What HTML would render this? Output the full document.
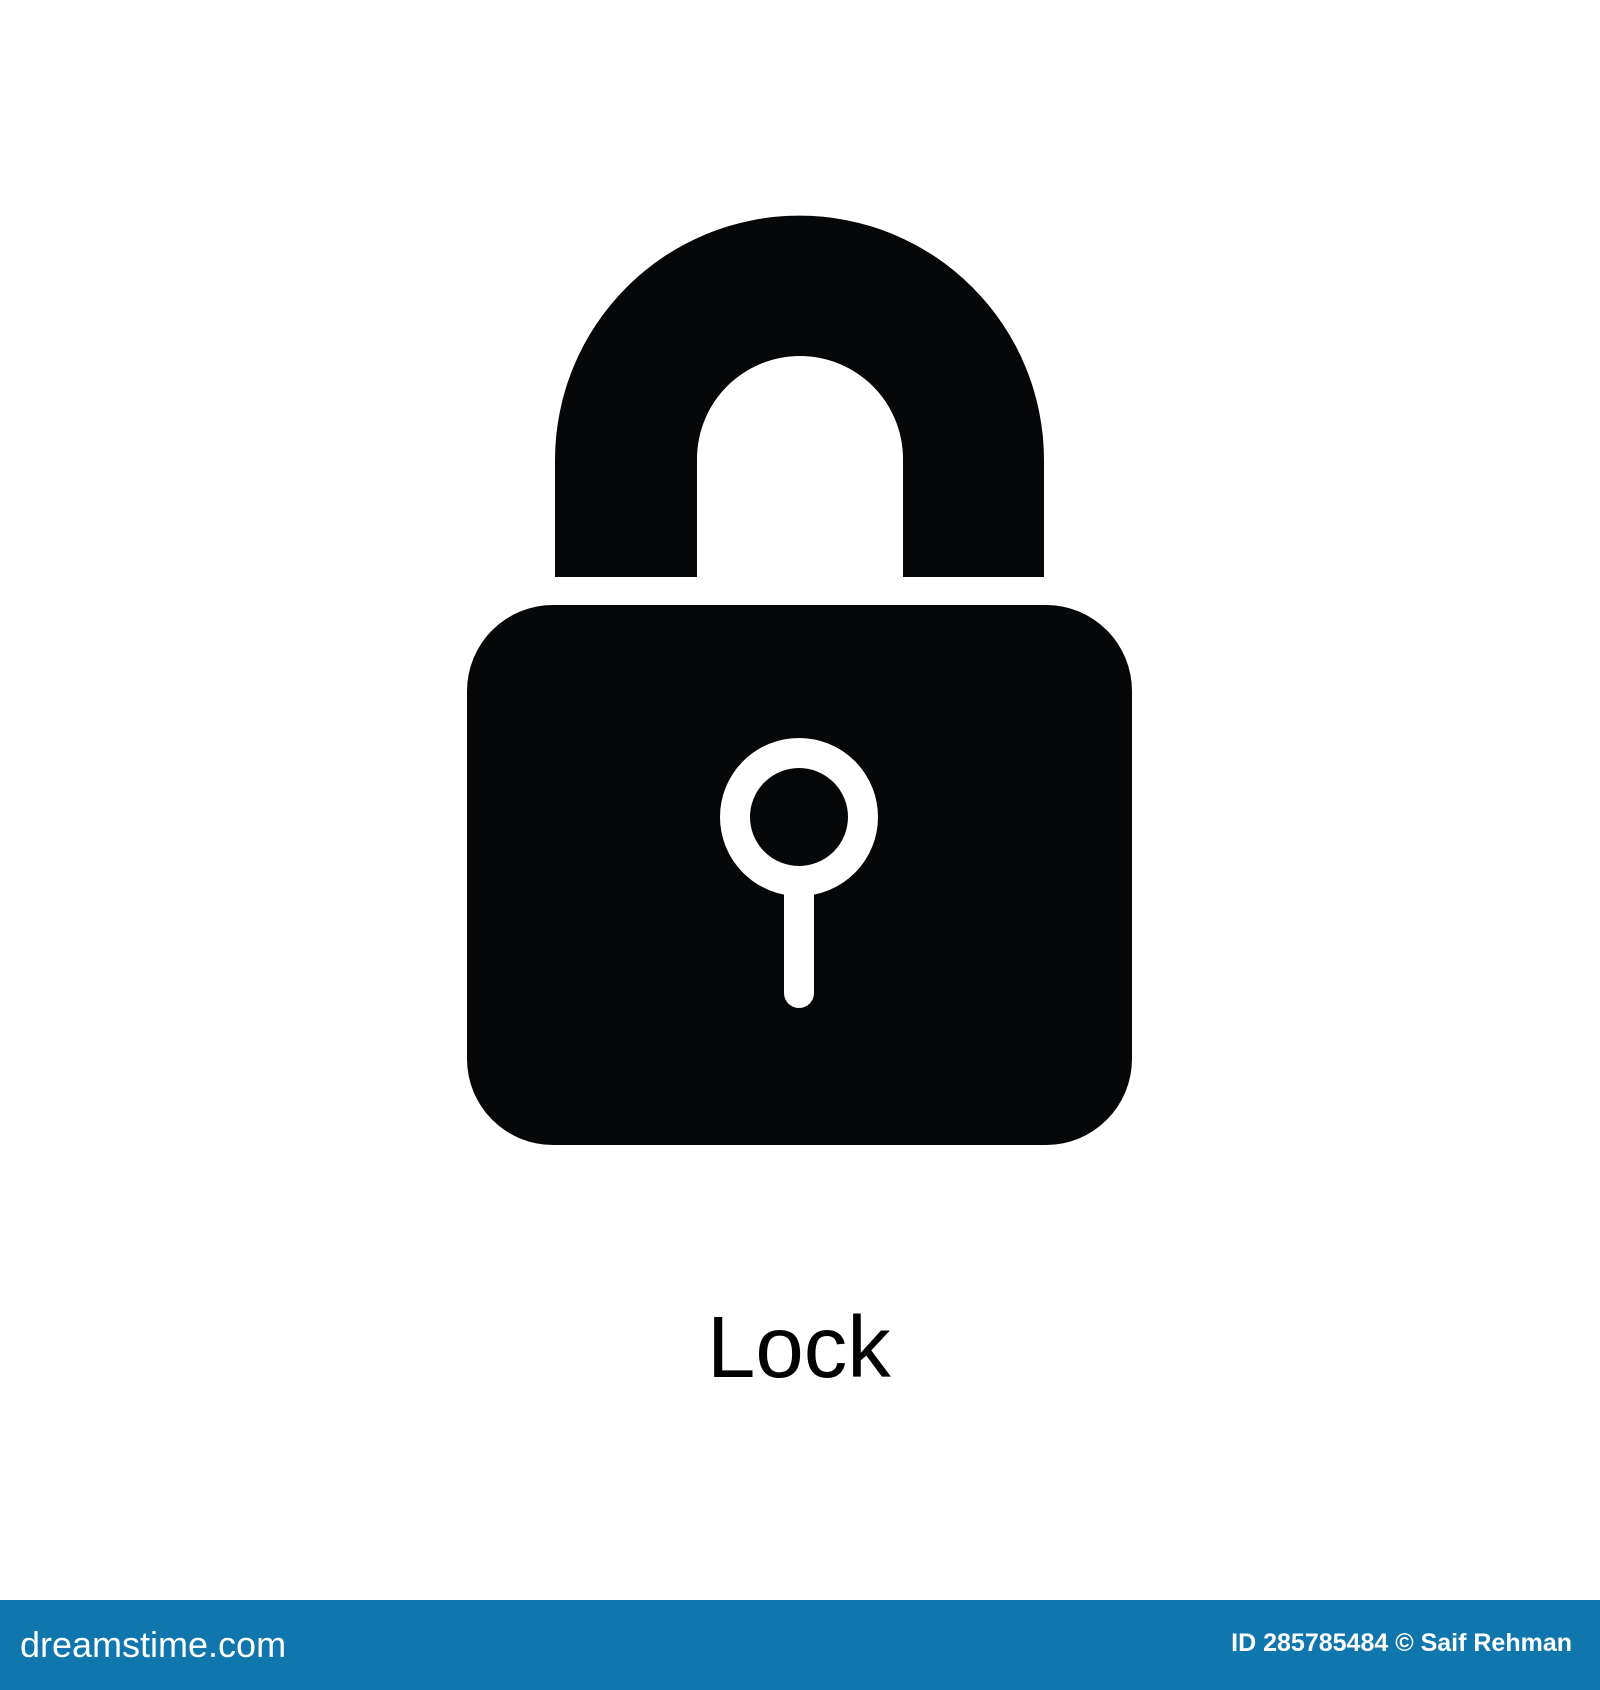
<!DOCTYPE html>
<html><head><meta charset="utf-8"><style>
html,body{margin:0;padding:0;background:#fff;}
body{width:1600px;height:1690px;position:relative;overflow:hidden;font-family:"Liberation Sans",sans-serif;}
svg{position:absolute;left:0;top:0;}
.lbl{position:absolute;left:707px;top:1304px;font-size:87px;color:#000;line-height:1;}
.bar{position:absolute;left:0;top:1600px;width:1600px;height:90px;background:#0f76ae;}
.l{position:absolute;left:20px;top:24px;color:#fff;font-size:36px;}
.r{position:absolute;right:28px;top:29px;color:#fff;font-size:25px;font-weight:bold;}
</style></head><body>
<svg width="1600" height="1600" viewBox="0 0 1600 1600">
<path d="M555 577 V460 A244.5 244.5 0 0 1 1044 460 V577 H903 V459 A103 103 0 0 0 697 459 V577 Z" fill="#060708"/>
<rect x="467" y="605" width="665" height="540" rx="86" fill="#060708"/>
<circle cx="799" cy="817" r="64" fill="none" stroke="#fff" stroke-width="30"/>
<line x1="799" y1="890" x2="799" y2="993" stroke="#fff" stroke-width="30" stroke-linecap="round"/>
</svg>
<div class="lbl">Lock</div>
<div class="bar"><div class="l">dreamstime.com</div><div class="r">ID 285785484 © Saif Rehman</div></div>
</body></html>
